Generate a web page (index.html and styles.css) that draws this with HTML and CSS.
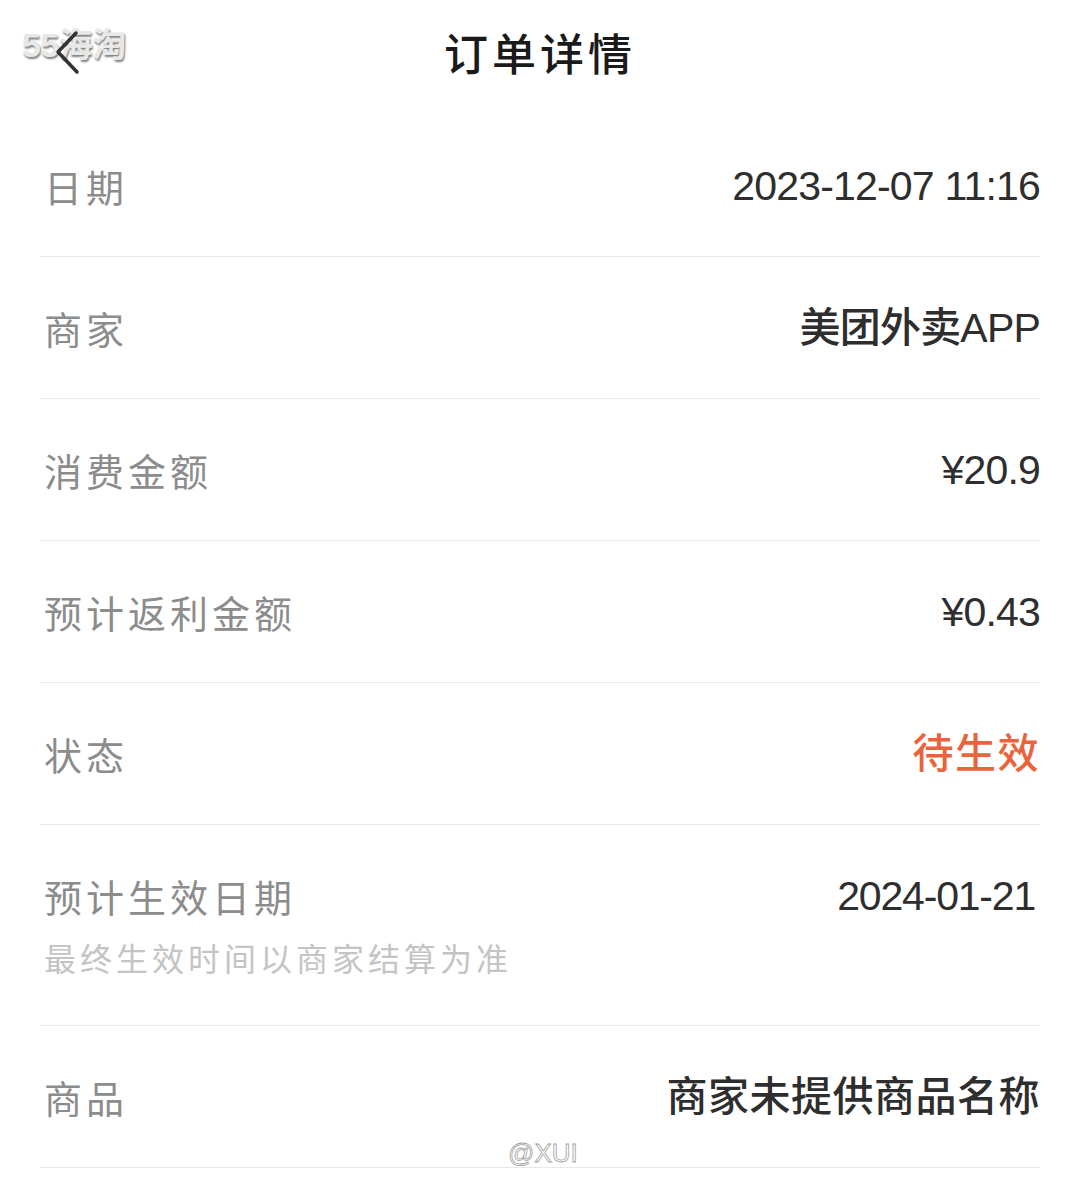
FILE: index.html
```html
<!DOCTYPE html>
<html lang="zh-CN">
<head>
  <meta charset="UTF-8">
  <meta name="viewport" content="width=device-width, initial-scale=1.0">
  <title>订单详情</title>
  <link rel="stylesheet" href="styles.css">
</head>
<body>
  <div class="page">
    <header class="nav">
      <span class="mark-top">55海淘</span>
      <svg class="back" width="40" height="60" viewBox="0 0 40 60">
        <polyline points="36,12 18,31 37,51" fill="none" stroke="#333" stroke-width="3.5" stroke-linecap="round" stroke-linejoin="round"/>
      </svg>
      <h1>订单详情</h1>
    </header>

    <div class="list">
      <div class="row">
        <span class="label">日期</span>
        <span class="value">2023-12-07 11:16</span>
      </div>
      <div class="row">
        <span class="label">商家</span>
        <span class="value">美团外卖APP</span>
      </div>
      <div class="row">
        <span class="label">消费金额</span>
        <span class="value">¥20.9</span>
      </div>
      <div class="row">
        <span class="label">预计返利金额</span>
        <span class="value">¥0.43</span>
      </div>
      <div class="row">
        <span class="label">状态</span>
        <span class="value status">待生效</span>
      </div>
      <div class="row">
        <div class="label-group">
          <span class="label">预计生效日期</span>
          <span class="hint">最终生效时间以商家结算为准</span>
        </div>
        <span class="value date">2024-01-21</span>
      </div>
      <div class="row">
        <span class="label">商品</span>
        <span class="value wide">商家未提供商品名称</span>
        <span class="mark-bottom">@XUI</span>
      </div>
    </div>
  </div>
</body>
</html>
```

FILE: styles.css
```css
body {
  margin: 0;
  padding: 0;
  background: #fff;
  font-family: "Noto Sans CJK SC", "Noto Sans", sans-serif;
  color: #333;
}
.page {
  width: 1080px;
  height: 1199px;
  overflow: hidden;
}
.nav {
  position: relative;
  height: 115px;
  display: flex;
  align-items: center;
  justify-content: center;
}
.nav h1 {
  margin: 0 0 12px;
  font-size: 44px;
  font-weight: 500;
  letter-spacing: 4px;
  color: #1a1a1a;
}
.back {
  position: absolute;
  left: 40px;
  top: 21px;
  z-index: 2;
}
.mark-top {
  position: absolute;
  left: 22px;
  top: 18px;
  z-index: 1;
  font-family: "Liberation Sans", "Noto Sans CJK SC", sans-serif;
  font-size: 34px;
  font-weight: bold;
  letter-spacing: -0.5px;
  color: #e8e8e8;
  text-shadow: 1px 2px 2px rgba(0, 0, 0, 0.5);
}
.list {
  padding: 0 40px;
}
.row {
  position: relative;
  display: flex;
  justify-content: space-between;
  align-items: flex-start;
  padding: 49px 0 48px;
  border-bottom: 1px solid #e8e8e8;
}
.label-group {
  display: flex;
  flex-direction: column;
  gap: 19px;
}
.label {
  font-size: 38px;
  line-height: 44px;
  letter-spacing: 4px;
  color: #8c8c8c;
  padding-left: 4px;
}
.hint {
  font-size: 32px;
  line-height: 40px;
  letter-spacing: 4px;
  color: #c4c4c4;
  padding-left: 4px;
}
.value {
  font-family: "Liberation Sans", "Noto Sans CJK SC", sans-serif;
  font-size: 41px;
  line-height: 44px;
  font-weight: 500;
  color: #2e2e2e;
  letter-spacing: -0.8px;
}
.value.date {
  margin-right: 5px;
  letter-spacing: -1.2px;
}
.value.wide {
  letter-spacing: 0.5px;
}
.status {
  color: #e9633c;
  letter-spacing: 1.5px;
}
.mark-bottom {
  position: absolute;
  left: 468px;
  bottom: -2px;
  font-family: "Liberation Sans", sans-serif;
  font-size: 26px;
  color: #fff;
  -webkit-text-stroke: 0.8px #a0a0a0;
}
```
